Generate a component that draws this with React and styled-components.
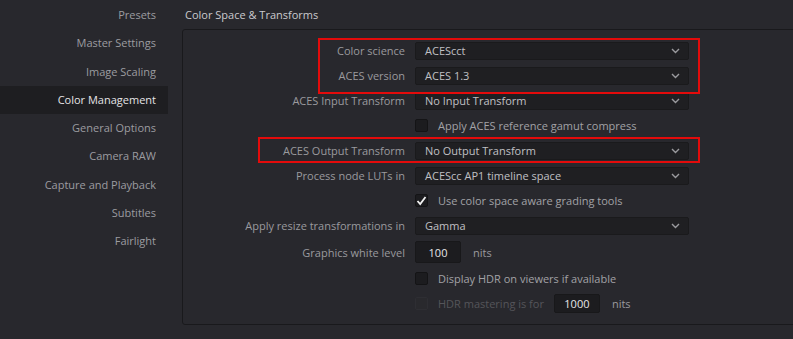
import styled, { createGlobalStyle } from "styled-components";

const Global = createGlobalStyle`
  html, body { margin:0; padding:0; background:#28282d; }
  body { font-family:"Open Sans", "Noto Sans", sans-serif; font-size:11px; }
`

const Page = styled.div`
  width:793px;
  height:339px;
  display:flex;
  overflow:hidden;
  background:#28282d;
`
const Sidebar = styled.div`
  width:168px;
  flex-shrink:0;
  display:flex;
  flex-direction:column;
  padding-top:1px;
`
const NavItem = styled.div`
  height:28.3px;
  line-height:28px;
  text-align:right;
  padding-right:12px;
  color:${props => props.active ? "#e4e4e6" : "#9c9ca0"};
  background:${props => props.active ? "#1e1e21" : "transparent"};
  font-size:11px;
  white-space:nowrap;
`
const Main = styled.div`
  flex:1;
  display:flex;
  flex-direction:column;
  padding-left:14px;
`
const Header = styled.div`
  height:29px;
  line-height:30px;
  color:#cacace;
  font-size:11px;
  padding-left:3px;
`
const Panel = styled.div`
  position:relative;
  margin-right:-4px;
  border:1px solid #19191c;
  border-radius:3px;
  padding:8px 0 8px 0;
  display:flex;
  flex-direction:column;
`
const Row = styled.div`
  height:${props => props.h || 25}px;
  display:flex;
  align-items:center;
  gap:10px;
`
const Label = styled.div`
  width:222px;
  text-align:right;
  color:#9a9a9e;
  white-space:nowrap;
`
const Select = styled.div`
  width:274px;
  height:18px;
  box-sizing:border-box;
  background:#1f1f22;
  border:1px solid #1a1a1c;
  border-radius:2px;
  display:flex;
  align-items:center;
  justify-content:space-between;
  padding:0 8px 0 9px;
  color:#c0c0c4;
`
const Check = styled.div`
  width:13px;
  height:13px;
  box-sizing:border-box;
  background:${props => props.disabled ? "#29292d" : "#1c1c1f"};
  border:1px solid ${props => props.disabled ? "#2e2e33" : "#141416"};
  border-radius:2px;
  display:flex;
  align-items:center;
  justify-content:center;
`
const CheckRow = styled.div`
  display:flex;
  align-items:center;
  gap:10px;
  margin-left:232px;
  color:${props => props.disabled ? "#55555a" : "#a2a2a6"};
`
const NumBox = styled.div`
  width:${props => props.w}px;
  height:${props => props.hh}px;
  box-sizing:border-box;
  background:#1c1c1f;
  border:1px solid #18181a;
  border-radius:2px;
  display:flex;
  align-items:center;
  justify-content:center;
  color:#e6e6e8;
`
const Unit = styled.span`
  color:#9a9a9e;
  margin-left:2px;
`
const Mark = styled.div`
  position:absolute;
  border:2px solid #e30b0b;
  pointer-events:none;
`

const Chevron = () => (
  <svg width="9" height="6" viewBox="0 0 9 6">
    <polyline points="1,1 4.5,4.5 8,1" fill="none" stroke="#9a9a9e" strokeWidth="1.4" />
  </svg>
)

const Tick = () => (
  <svg width="11" height="10" viewBox="0 0 11 10">
    <polyline points="1.5,5 4.2,8 9.5,1" fill="none" stroke="#f2f2f2" strokeWidth="1.8" />
  </svg>
)

const nav = ["Presets", "Master Settings", "Image Scaling", "Color Management", "General Options", "Camera RAW", "Capture and Playback", "Subtitles", "Fairlight"]

const selects = [
  ["Color science", "ACEScct"],
  ["ACES version", "ACES 1.3"],
  ["ACES Input Transform", "No Input Transform"],
]

const App = () => {
  return (
    <>
      <Global />
      <Page>
        <Sidebar>
          {nav.map(n => <NavItem key={n} active={n === "Color Management"}>{n}</NavItem>)}
        </Sidebar>
        <Main>
          <Header>Color Space &amp; Transforms</Header>
          <Panel>
            {selects.map(([l, v]) => (
              <Row key={l}><Label>{l}</Label><Select>{v}<Chevron /></Select></Row>
            ))}
            <Row><CheckRow><Check />Apply ACES reference gamut compress</CheckRow></Row>
            <Row><Label>ACES Output Transform</Label><Select>No Output Transform<Chevron /></Select></Row>
            <Row><Label>Process node LUTs in</Label><Select>ACEScc AP1 timeline space<Chevron /></Select></Row>
            <Row><CheckRow><Check><Tick /></Check>Use color space aware grading tools</CheckRow></Row>
            <Row><Label>Apply resize transformations in</Label><Select>Gamma<Chevron /></Select></Row>
            <Row h={28}><Label>Graphics white level</Label><NumBox w={46} hh={22}>100</NumBox><Unit>nits</Unit></Row>
            <Row><CheckRow><Check />Display HDR on viewers if available</CheckRow></Row>
            <Row>
              <CheckRow disabled><Check disabled />HDR mastering is for</CheckRow>
              <NumBox w={46} hh={19}>1000</NumBox><Unit>nits</Unit>
            </Row>
            <Mark style={{ left: 135, top: 8, width: 378, height: 52 }} />
            <Mark style={{ left: 75, top: 107, width: 438, height: 22 }} />
          </Panel>
        </Main>
      </Page>
    </>
  )
}

export default App
